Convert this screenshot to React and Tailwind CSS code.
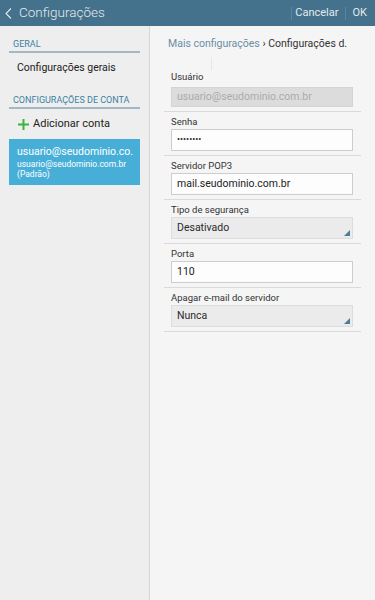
import React from "react";

function Field({ label, children, first }) {
  return (
    <div className={`border-b border-[#dadada] ${first ? "pt-0" : "pt-[4px]"} pb-[4px]`}>
      <div className="text-[9.5px] leading-[12px] pl-[7px] text-[#333333]">{label}</div>
      {children}
    </div>
  );
}

function TextBox({ value, muted, h = "h-[22px]", mt = "mt-[1px]" }) {
  return (
    <div
      className={`${mt} ${h} ml-[7px] mr-[8px] flex items-center px-[5px] text-[10.5px] border ${
        muted
          ? "bg-[#dcdcdc] border-[#d3d3d3] text-[#ababab]"
          : "bg-[#fdfdfd] border-[#cdcdcd] text-[#222222]"
      }`}
    >
      {value}
    </div>
  );
}

function SelectBox({ value }) {
  return (
    <div className="relative mt-[1px] h-[22px] ml-[7px] mr-[8px] flex items-center px-[5px] text-[10.5px] text-[#2a2a2a] bg-[#ebebeb] border border-[#dddddd]">
      {value}
      <svg className="absolute right-[2px] bottom-[2px]" width="6" height="6" viewBox="0 0 6 6">
        <polygon points="6,0 6,6 0,6" fill="#4f7c99" />
      </svg>
    </div>
  );
}

export default function App() {
  return (
    <div className="w-[375px] h-[600px] flex flex-col overflow-hidden font-[Roboto,'Liberation_Sans',sans-serif]">
      <div className="h-[26px] shrink-0 bg-[#44718b] flex items-center text-[#e3eaee]">
        <svg className="ml-[5px]" width="7" height="11" viewBox="0 0 7 11">
          <polyline points="6,0.5 1,5.5 6,10.5" fill="none" stroke="#e3eaee" strokeWidth="1.1" />
        </svg>
        <span className="ml-[7px] text-[13.5px] font-light leading-none">Configurações</span>
        <div className="ml-auto flex items-center h-full text-[11px]">
          <div className="w-px h-[13px] bg-[#5a859d]" />
          <span className="ml-[3px]">Cancelar</span>
          <div className="ml-[6px] w-px h-[13px] bg-[#5a859d]" />
          <span className="ml-[7px] mr-[8px]">OK</span>
        </div>
      </div>
      <div className="flex flex-1">
        <div className="w-[150px] shrink-0 bg-[#eeeeee] border-r border-[#d6d6d6] px-[9px] pt-[12px]">
          <div className="text-[9px] leading-[12px] pl-[4px] text-[#3b82a3]">GERAL</div>
          <div className="mt-[1px] h-[2px] bg-[#a3b8c4]" />
          <div className="mt-[8px] pl-[8px] text-[10.5px] leading-[14px] text-[#222222]">Configurações gerais</div>
          <div className="mt-[19px] text-[9px] leading-[12px] pl-[4px] text-[#3b82a3]">CONFIGURAÇÕES DE CONTA</div>
          <div className="mt-[1px] h-[2px] bg-[#a3b8c4]" />
          <div className="mt-[8px] pl-[9px] flex items-center h-[14px] text-[11px] text-[#222222]">
            <svg width="11" height="11" viewBox="0 0 11 11">
              <rect x="4.5" y="0" width="2" height="11" fill="#3cb43c" />
              <rect x="0" y="4.5" width="11" height="2" fill="#3cb43c" />
            </svg>
            <span className="ml-[4px]">Adicionar conta</span>
          </div>
          <div className="mt-[8px] h-[46px] bg-[#47afd7] pl-[8px] pt-[6px] text-white">
            <div className="text-[10.5px] leading-[14px]">usuario@seudominio.co.</div>
            <div className="text-[8.5px] leading-[10px]">usuario@seudominio.com.br</div>
            <div className="text-[8.5px] leading-[10px]">(Padrão)</div>
          </div>
        </div>
        <div className="flex-1 bg-[#f5f5f5] px-[14px] pt-[11px]">
          <div className="pl-[4px] h-[14px] leading-[14px] text-[10.5px] whitespace-nowrap">
            <span className="text-[#6a8ea5]">Mais configurações</span>
            <span className="text-[#333333]"> › Configurações d.</span>
          </div>
          <div className="h-[20px] flex">
            <div className="ml-[47px] mt-[6px] w-px h-[13px] bg-[#e6e6e6]" />
          </div>
          <Field label="Usuário" first>
            <TextBox value="usuario@seudominio.com.br" muted h="h-[20px]" mt="mt-[4px]" />
          </Field>
          <Field label="Senha">
            <TextBox value={<span className="text-[9px]">••••••••</span>} />
          </Field>
          <Field label="Servidor POP3">
            <TextBox value="mail.seudominio.com.br" />
          </Field>
          <Field label="Tipo de segurança">
            <SelectBox value="Desativado" />
          </Field>
          <Field label="Porta">
            <TextBox value="110" />
          </Field>
          <Field label="Apagar e-mail do servidor">
            <SelectBox value="Nunca" />
          </Field>
        </div>
      </div>
    </div>
  );
}
